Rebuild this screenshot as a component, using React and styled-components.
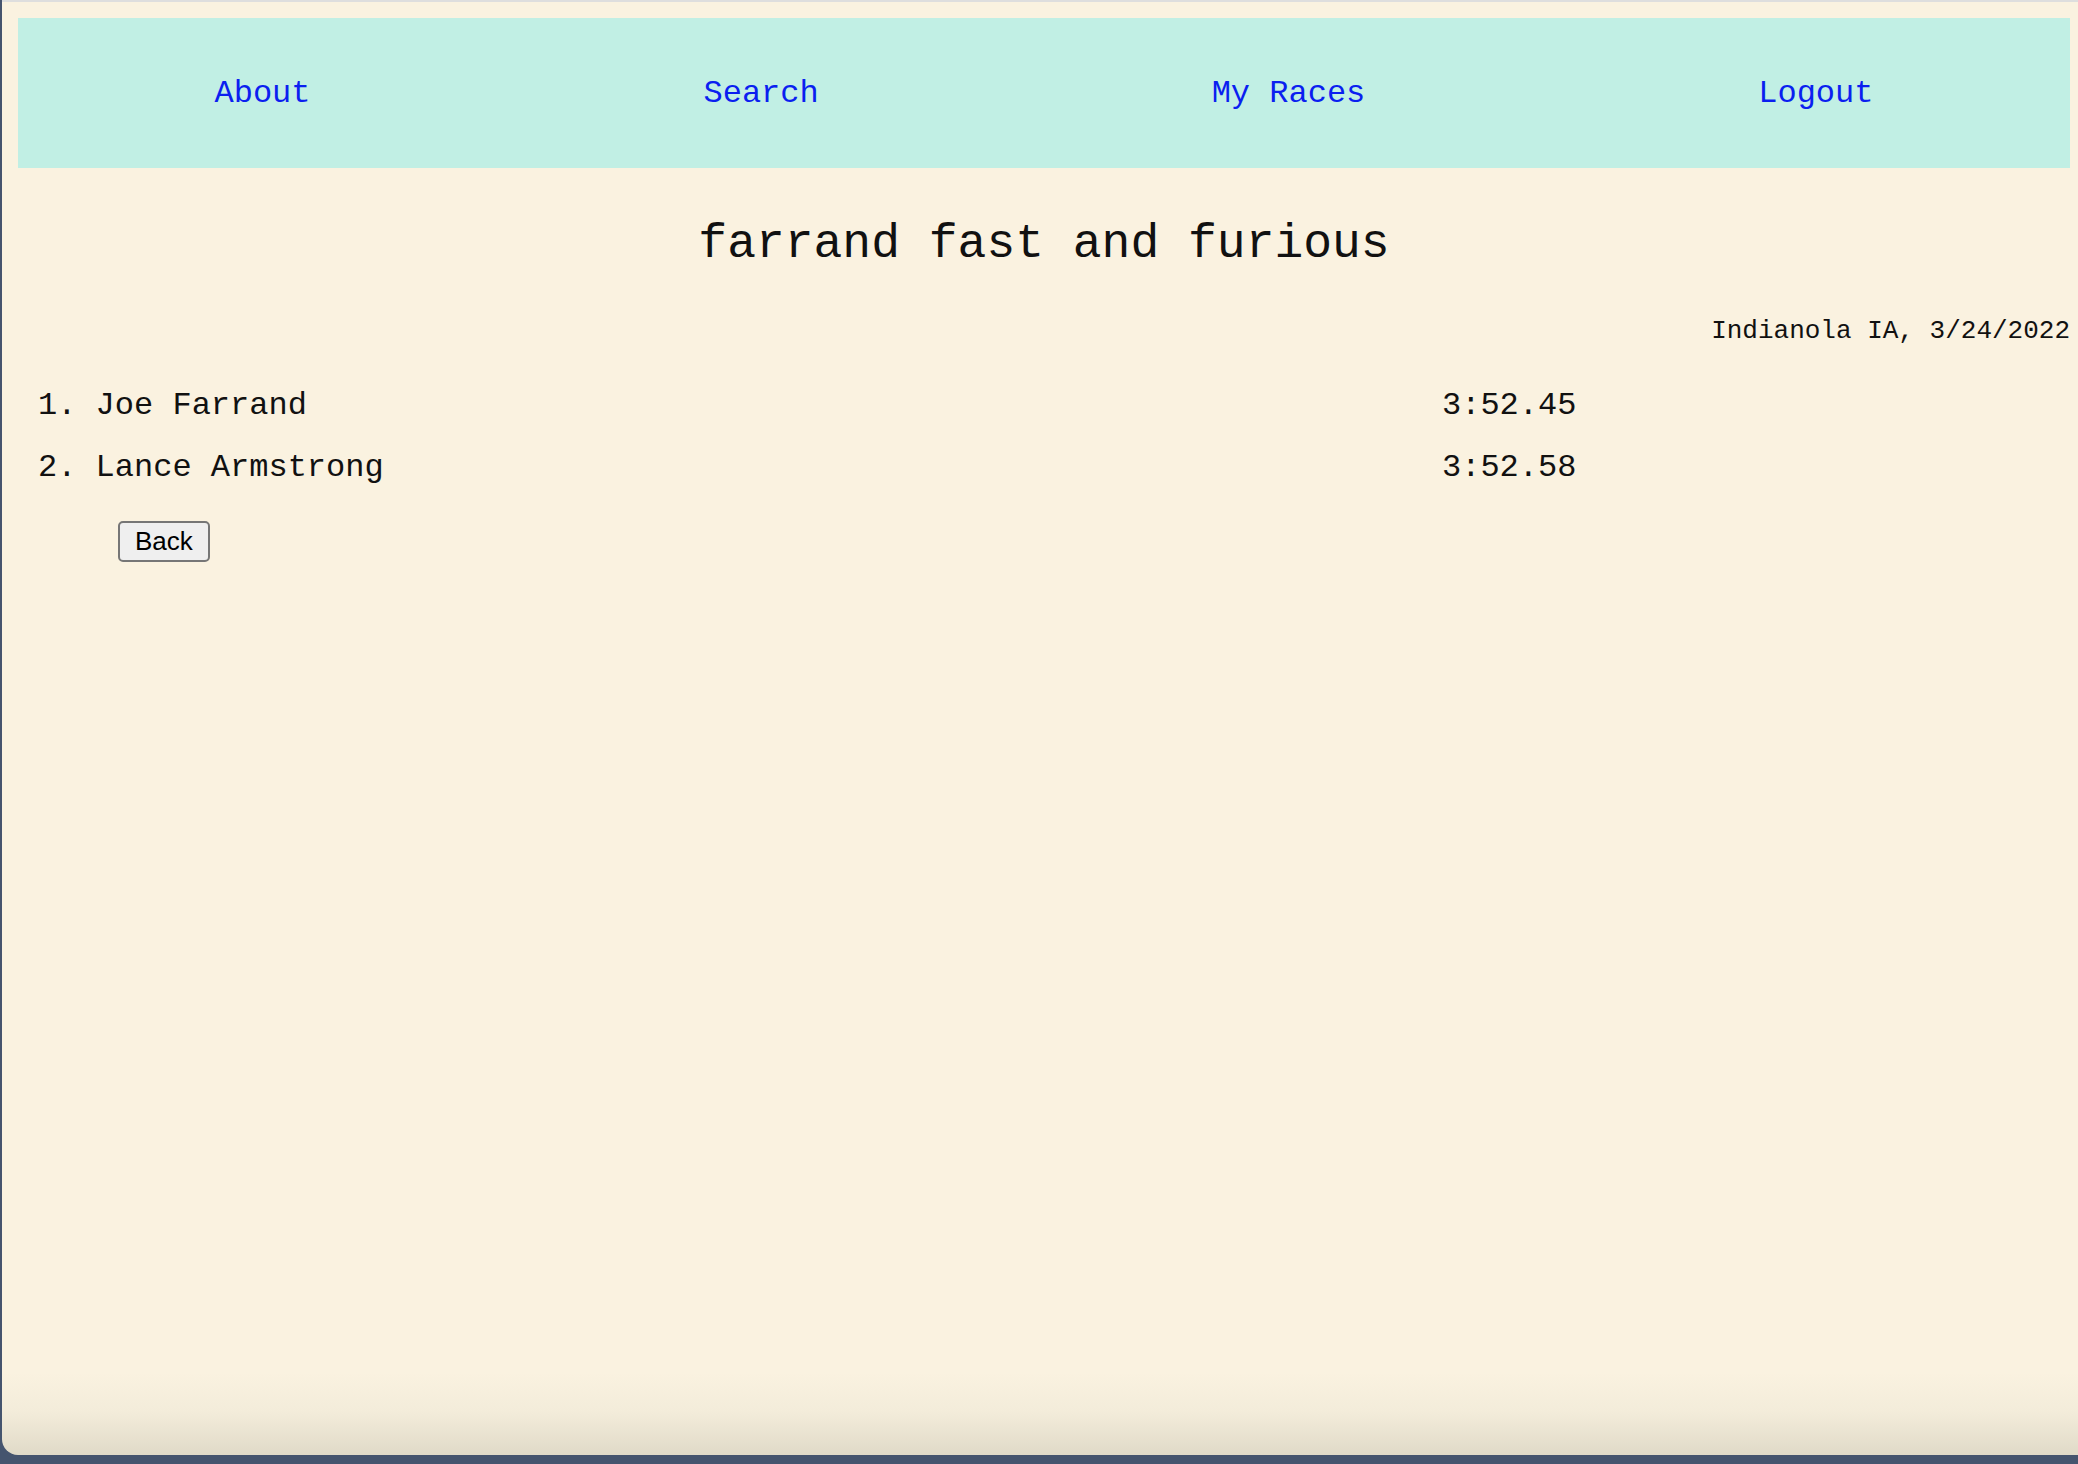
import React from 'react'
import styled, { createGlobalStyle } from 'styled-components'

const GlobalStyle = createGlobalStyle`
  html, body {
    margin: 0;
    padding: 0;
    background: #45546e;
  }
  body {
    font-family: "Liberation Mono", "DejaVu Sans Mono", monospace;
    overflow: hidden;
  }
`

const Window = styled.div`
  margin-left: 2px;
  height: 1455px;
  box-sizing: border-box;
  border-top: 2px solid #dedede;
  border-bottom-left-radius: 16px;
  background: linear-gradient(
    to bottom,
    #faf2e0 0,
    #faf2e0 1370px,
    #f3ecda 1410px,
    #e0dac8 100%
  );
  padding: 16px 8px 0 16px;
`

const Nav = styled.nav`
  height: 150px;
  background: #c1efe4;
  display: flex;
  align-items: center;
  justify-content: space-around;
`

const NavLink = styled.a`
  font-size: 32px;
  color: #0b1ff0;
  text-decoration: none;
  cursor: pointer;
`

const Title = styled.h1`
  margin: 46px 0 0;
  font-size: 48px;
  font-weight: 400;
  line-height: 60px;
  text-align: center;
  color: #111;
`

const Location = styled.div`
  margin-top: 41px;
  font-size: 26px;
  line-height: 32px;
  text-align: right;
  color: #111;
`

const Results = styled.div`
  margin-top: 28px;
  display: grid;
  grid-template-columns: 1404px auto;
  padding-left: 20px;
`

const Cell = styled.div`
  font-size: 32px;
  line-height: 62px;
  color: #111;
  white-space: pre;
`

const BackButton = styled.button`
  margin: 22px 0 0 100px;
  height: 41px;
  padding: 0 15px;
  font-family: "Liberation Sans", Arial, sans-serif;
  font-size: 26px;
  color: #000;
  background: #efefef;
  border: 2px solid #767676;
  border-radius: 5px;
  cursor: pointer;
`

const links = ['About', 'Search', 'My Races', 'Logout']

const results = [
  { place: 1, name: 'Joe Farrand', time: '3:52.45' },
  { place: 2, name: 'Lance Armstrong', time: '3:52.58' },
]

const App = () => {
  return (
    <>
      <GlobalStyle />
      <Window>
        <Nav>
          {links.map((l) => (
            <NavLink key={l}>{l}</NavLink>
          ))}
        </Nav>
        <Title>farrand fast and furious</Title>
        <Location>Indianola IA, 3/24/2022</Location>
        <Results>
          {results.map((r) => (
            <React.Fragment key={r.place}>
              <Cell>{`${r.place}. ${r.name}`}</Cell>
              <Cell>{r.time}</Cell>
            </React.Fragment>
          ))}
        </Results>
        <BackButton>Back</BackButton>
      </Window>
    </>
  )
}

export default App
